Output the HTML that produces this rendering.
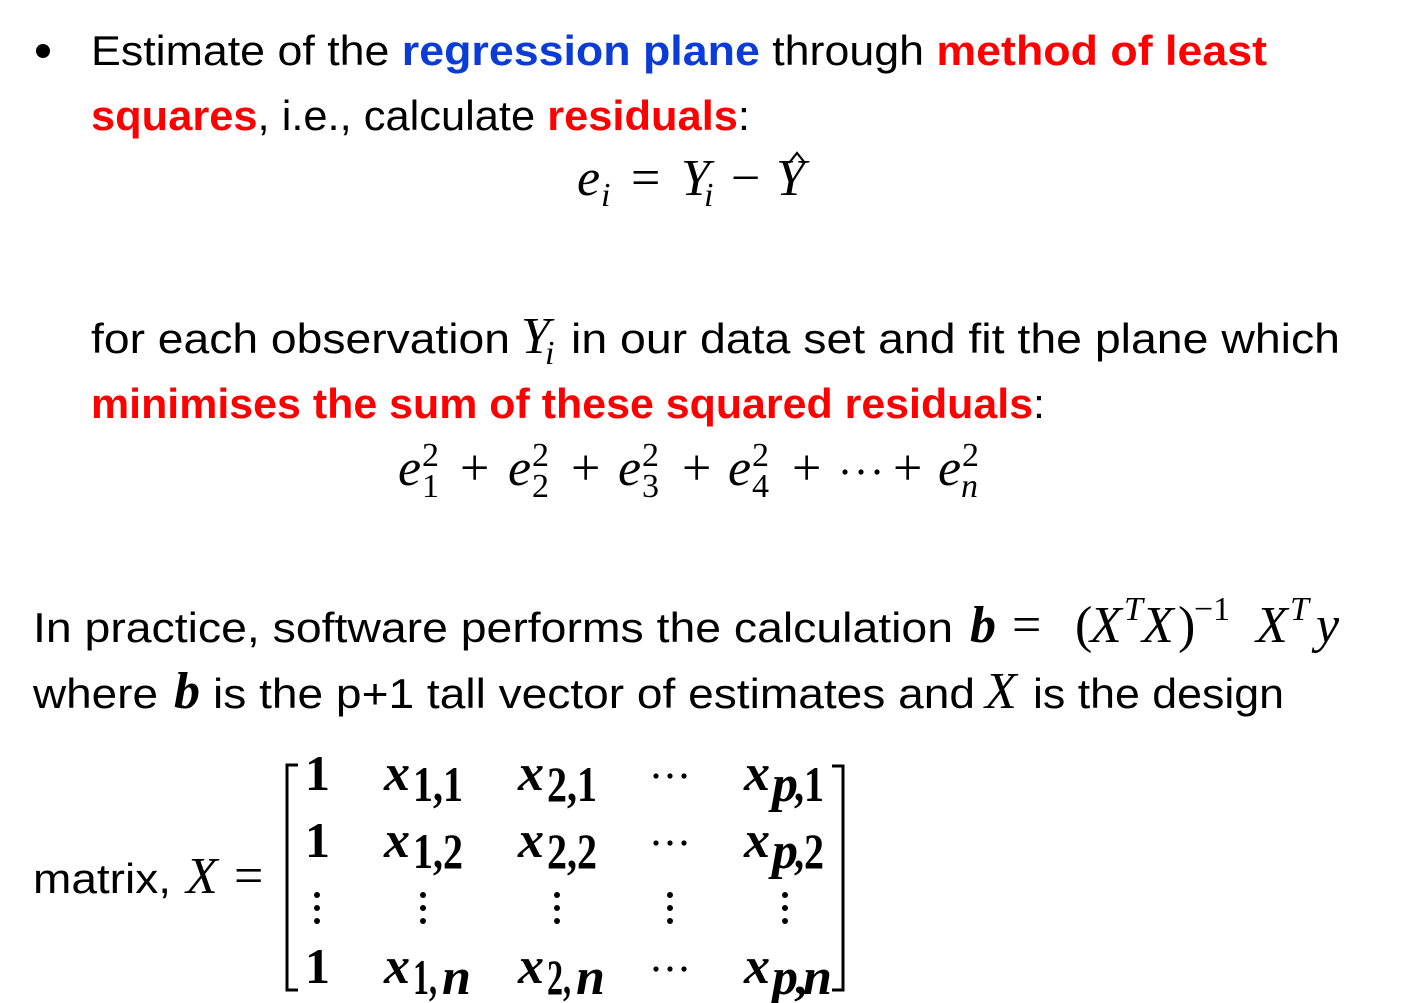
<!DOCTYPE html>
<html><head><meta charset="utf-8"><style>
html,body{margin:0;padding:0;background:#fff;width:1412px;height:1003px;overflow:hidden}
svg{display:block}
.t{font-family:"Liberation Sans",sans-serif;font-size:42px;fill:#000}
.b{font-weight:bold}
.red{fill:#ff0000}.blue{fill:#0b3cd6}
.m{font-family:"Liberation Serif","DejaVu Serif",serif;font-style:italic;font-size:52px;fill:#000}
.mu{font-family:"Liberation Serif","DejaVu Serif",serif;font-style:normal;font-size:52px;fill:#000}
.s{font-size:34px}
.ss{font-size:31px}
.mb{font-family:"Liberation Serif","DejaVu Serif",serif;font-weight:bold;font-style:italic;font-size:52px;fill:#000}
.mbu{font-family:"Liberation Serif","DejaVu Serif",serif;font-weight:bold;font-style:normal;font-size:50px;fill:#000}
</style></head><body>
<svg width="1412" height="1003" viewBox="0 0 1412 1003" xmlns="http://www.w3.org/2000/svg">
<circle cx="43" cy="51" r="7" fill="#000"/>
<text class="t" x="91" y="65" textLength="1176" lengthAdjust="spacingAndGlyphs">Estimate of the <tspan class="b blue">regression plane</tspan> through <tspan class="b red">method of least</tspan></text>
<text class="t" x="91" y="130" textLength="659" lengthAdjust="spacingAndGlyphs"><tspan class="b red">squares</tspan>, i.e., calculate <tspan class="b red">residuals</tspan>:</text>

<text class="m" x="577" y="195">e</text><text class="m s" x="601" y="206">i</text>
<text class="mu" x="631" y="195">=</text>
<text class="m" x="681" y="195">Y</text><text class="m s" x="704" y="206">i</text>
<text class="mu" x="731" y="195">−</text>
<text class="m" x="776" y="195">Y</text>
<path d="M789 163 L797 153 L805 163" fill="none" stroke="#000" stroke-width="2.2"/>

<text class="t" x="91" y="353" textLength="419" lengthAdjust="spacingAndGlyphs">for each observation</text>
<text class="m" x="521" y="353">Y</text><text class="m s" x="545" y="364">i</text>
<text class="t" x="571" y="353" textLength="769" lengthAdjust="spacingAndGlyphs">in our data set and fit the plane which</text>
<text class="t" x="91" y="418" textLength="954" lengthAdjust="spacingAndGlyphs"><tspan class="b red">minimises the sum of these squared residuals</tspan>:</text>

<g>
<text class="m" x="398" y="485">e</text><text class="mu s" x="422" y="466">2</text><text class="mu s" x="422" y="497">1</text>
<text class="mu" x="460" y="485">+</text>
<text class="m" x="508" y="485">e</text><text class="mu s" x="532" y="466">2</text><text class="mu s" x="532" y="497">2</text>
<text class="mu" x="571" y="485">+</text>
<text class="m" x="618" y="485">e</text><text class="mu s" x="642" y="466">2</text><text class="mu s" x="642" y="497">3</text>
<text class="mu" x="682" y="485">+</text>
<text class="m" x="728" y="485">e</text><text class="mu s" x="752" y="466">2</text><text class="mu s" x="752" y="497">4</text>
<text class="mu" x="792" y="485">+</text>
<circle cx="845" cy="472" r="2.6"/><circle cx="861" cy="472" r="2.6"/><circle cx="877" cy="472" r="2.6"/>
<text class="mu" x="893" y="485">+</text>
<text class="m" x="938" y="485">e</text><text class="mu s" x="962" y="466">2</text><text class="m s" x="961" y="497">n</text>
</g>

<text class="t" x="33" y="642" textLength="920" lengthAdjust="spacingAndGlyphs">In practice, software performs the calculation</text>
<text class="mb" x="970" y="642">b</text>
<text class="mu" x="1012" y="642">=</text>
<text class="mu" x="1075" y="642">(</text>
<text class="m" x="1090" y="642">X</text><text class="m s" x="1124" y="620">T</text>
<text class="m" x="1142" y="642">X</text>
<text class="mu" x="1178" y="642">)</text>
<text class="mu s" x="1194" y="620">−1</text>
<text class="m" x="1256" y="642">X</text><text class="m s" x="1290" y="620">T</text>
<text class="m" x="1316" y="642">y</text>

<text class="t" x="33" y="708" textLength="125" lengthAdjust="spacingAndGlyphs">where</text>
<text class="mb" x="174" y="708">b</text>
<text class="t" x="213" y="708" textLength="762" lengthAdjust="spacingAndGlyphs">is the p+1 tall vector of estimates and</text>
<text class="m" x="985" y="708">X</text>
<text class="t" x="1033" y="708" textLength="251" lengthAdjust="spacingAndGlyphs">is the design</text>

<text class="t" x="33" y="893" textLength="138" lengthAdjust="spacingAndGlyphs">matrix,</text>
<text class="m" x="186" y="893">X</text>
<text class="mu" x="234" y="893">=</text>

<path d="M298 765 H287 V990 H298" fill="none" stroke="#000" stroke-width="3"/>
<path d="M832 766 H843 V990 H832" fill="none" stroke="#000" stroke-width="3"/>

<g>
<text class="mbu" x="305" y="790">1</text>
<text class="mb" x="384" y="790">x</text><text class="mbu ss" x="413" y="801" textLength="50" lengthAdjust="spacingAndGlyphs">1,1</text>
<text class="mb" x="518" y="790">x</text><text class="mbu ss" x="547" y="801" textLength="50" lengthAdjust="spacingAndGlyphs">2,1</text>
<circle cx="656" cy="776" r="2.6"/><circle cx="670" cy="776" r="2.6"/><circle cx="684" cy="776" r="2.6"/>
<text class="mb" x="744" y="790">x</text><text class="mb ss" x="772" y="801">p</text><text class="mbu ss" x="794" y="801" textLength="30" lengthAdjust="spacingAndGlyphs">,1</text>

<text class="mbu" x="305" y="857">1</text>
<text class="mb" x="384" y="857">x</text><text class="mbu ss" x="413" y="868" textLength="50" lengthAdjust="spacingAndGlyphs">1,2</text>
<text class="mb" x="518" y="857">x</text><text class="mbu ss" x="547" y="868" textLength="50" lengthAdjust="spacingAndGlyphs">2,2</text>
<circle cx="656" cy="843" r="2.6"/><circle cx="670" cy="843" r="2.6"/><circle cx="684" cy="843" r="2.6"/>
<text class="mb" x="744" y="857">x</text><text class="mb ss" x="772" y="868">p</text><text class="mbu ss" x="794" y="868" textLength="30" lengthAdjust="spacingAndGlyphs">,2</text>

<g>
<circle cx="317" cy="895" r="3"/><circle cx="317" cy="908" r="3"/><circle cx="317" cy="921" r="3"/>
<circle cx="423" cy="895" r="3"/><circle cx="423" cy="908" r="3"/><circle cx="423" cy="921" r="3"/>
<circle cx="557" cy="895" r="3"/><circle cx="557" cy="908" r="3"/><circle cx="557" cy="921" r="3"/>
<circle cx="670" cy="895" r="3"/><circle cx="670" cy="908" r="3"/><circle cx="670" cy="921" r="3"/>
<circle cx="785" cy="895" r="3"/><circle cx="785" cy="908" r="3"/><circle cx="785" cy="921" r="3"/>
</g>

<text class="mbu" x="305" y="983">1</text>
<text class="mb" x="384" y="983">x</text><text class="mbu ss" x="413" y="994" textLength="24" lengthAdjust="spacingAndGlyphs">1,</text><text class="mb ss" x="442" y="994">n</text>
<text class="mb" x="518" y="983">x</text><text class="mbu ss" x="547" y="994" textLength="24" lengthAdjust="spacingAndGlyphs">2,</text><text class="mb ss" x="576" y="994">n</text>
<circle cx="656" cy="969" r="2.6"/><circle cx="670" cy="969" r="2.6"/><circle cx="684" cy="969" r="2.6"/>
<text class="mb" x="744" y="983">x</text><text class="mb ss" x="772" y="994">p</text><text class="mbu ss" x="794" y="994">,</text><text class="mb ss" x="803" y="994">n</text>
</g>
</svg>
</body></html>
